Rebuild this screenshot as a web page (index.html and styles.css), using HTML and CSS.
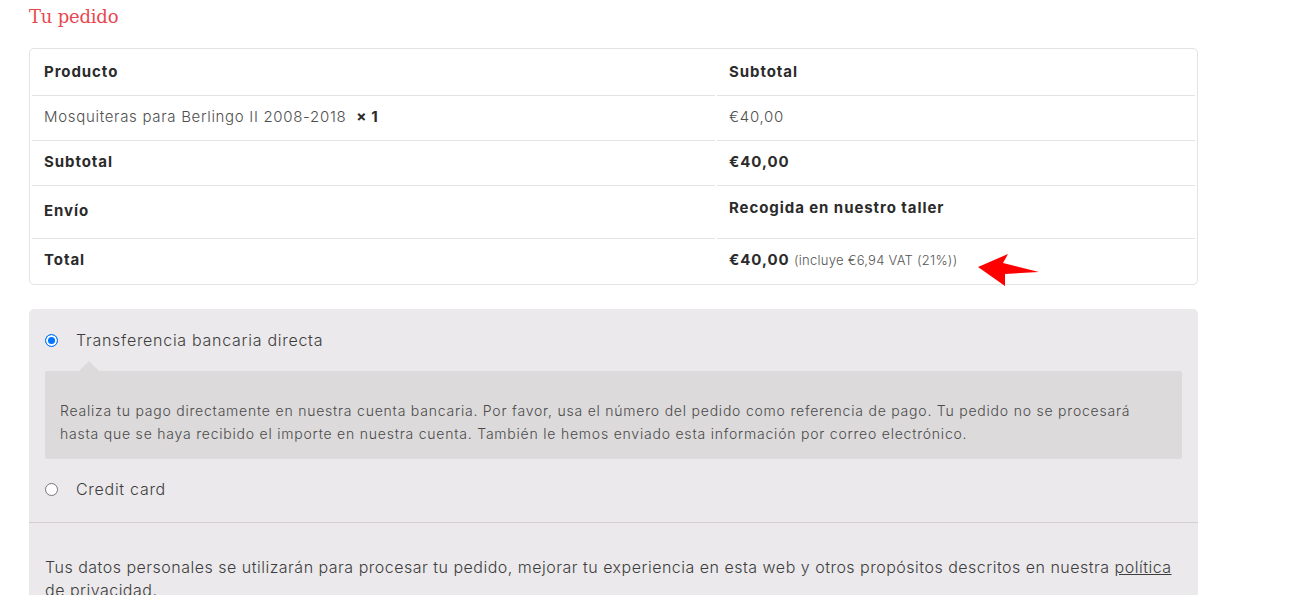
FILE: index.html
```html
<!DOCTYPE html>
<html lang="es">
<head>
<meta charset="utf-8">
<title>Tu pedido</title>
<link rel="stylesheet" href="styles.css">
</head>
<body>
<div class="wrap">
  <h3 class="order-title">Tu pedido</h3>
  <div class="review">
    <table class="shop-table">
      <thead>
        <tr><th class="col-product">Producto</th><th class="col-total">Subtotal</th></tr>
      </thead>
      <tbody>
        <tr class="row"><td class="light">Mosquiteras para Berlingo II 2008-2018&nbsp; <strong class="qty">×&nbsp;1</strong></td><td class="light">€40,00</td></tr>
        <tr class="row"><th>Subtotal</th><td class="strong">€40,00</td></tr>
        <tr class="row shipping"><th class="ship-th">Envío</th><td class="strong ship-td">Recogida en nuestro taller</td></tr>
        <tr class="row"><th>Total</th><td class="strong total-td">€40,00 <small class="tax">(incluye €6,94 VAT (21%))</small>
          <svg class="arrow" width="64" height="34" viewBox="0 0 64 34"><polygon points="0,14 30,1 25,10 61,19 27,21 27,33" fill="#ff0000"/></svg>
        </td></tr>
      </tbody>
    </table>
  </div>

  <div class="payment">
    <ul class="methods">
      <li class="method">
        <label class="method-label"><span class="radio checked"></span>Transferencia bancaria directa</label>
        <div class="payment-box">
          <p>Realiza tu pago directamente en nuestra cuenta bancaria. Por favor, usa el número del pedido como referencia de pago. Tu pedido no se procesará hasta que se haya recibido el importe en nuestra cuenta. También le hemos enviado esta información por correo electrónico.</p>
        </div>
      </li>
      <li class="method second">
        <label class="method-label"><span class="radio"></span>Credit card</label>
      </li>
    </ul>
    <div class="place-order">
      <p>Tus datos personales se utilizarán para procesar tu pedido, mejorar tu experiencia en esta web y otros propósitos descritos en nuestra <a href="#" class="policy">política de privacidad</a>.</p>
    </div>
  </div>
</div>
</body>
</html>
```

FILE: styles.css
```css
html, body {
  margin: 0;
  padding: 0;
  background: #ffffff;
}
body {
  font-family: "Inter", "Noto Sans", sans-serif;
  color: #515151;
  letter-spacing: 0.045em;
}
.wrap {
  width: 1169px;
  padding-left: 29px;
}
.order-title {
  margin: 0;
  padding-top: 2px;
  font-family: "DejaVu Serif", serif;
  font-weight: normal;
  font-size: 18px;
  line-height: 30px;
  color: #e94750;
  letter-spacing: -0.2px;
}
.review {
  margin-top: 16px;
}
.shop-table {
  width: 1169px;
  border: 1px solid #e3e3e3;
  border-radius: 5px;
  border-collapse: separate;
  border-spacing: 2px 0;
  font-size: 15px;
  line-height: 21px;
}
.shop-table th,
.shop-table td {
  text-align: left;
  vertical-align: top;
  padding: 10px 12px 13px;
  font-weight: 700;
  color: #2b2b2b;
  letter-spacing: 0.062em;
}
.shop-table thead th {
  padding: 12px 12px 13px;
}
.col-product { width: 659px; }
.row th, .row td {
  border-top: 1px solid #e3e3e3;
}
.shop-table td.light {
  font-weight: 300;
  color: #4f4f4f;
  letter-spacing: 0.046em;
}
.qty {
  font-weight: 700;
  color: #2b2b2b;
}
.shop-table .ship-th {
  padding-top: 14px;
  padding-bottom: 17px;
}
.shop-table .ship-td {
  padding-top: 11px;
  padding-bottom: 20px;
}
.total-td {
  position: relative;
}
.tax {
  font-size: 13px;
  font-weight: 300;
  color: #555;
  letter-spacing: 0.02em;
}
.arrow {
  position: absolute;
  left: 261px;
  top: 14px;
}
.payment {
  margin-top: 24px;
  background: #ebe9eb;
  border-radius: 5px 5px 0 0;
}
.methods {
  list-style: none;
  margin: 0;
  padding: 16px 16px 18px;
  border-bottom: 1px solid #d3ced2;
}
.method-label {
  display: flex;
  align-items: center;
  font-size: 16px;
  line-height: 30px;
  font-weight: 300;
  color: #3d3d3d;
}
.radio {
  width: 13px;
  height: 13px;
  box-sizing: border-box;
  border-radius: 50%;
  border: 1px solid #767676;
  background: #fff;
  margin: 0 18px 0 0;
  flex: none;
}
.radio.checked {
  border: 1px solid #0075ff;
  background: #0075ff;
  box-shadow: inset 0 0 0 2px #fff;
}
.payment-box {
  position: relative;
  margin-top: 16px;
  background: #dcdadb;
  padding: 28px 15px 14px;
  font-size: 14px;
  line-height: 23px;
  font-weight: 300;
  color: #4a4a4a;
  letter-spacing: 0.056em;
  border-radius: 2px;
}
.payment-box::before {
  content: "";
  position: absolute;
  left: 34px;
  top: -10px;
  border-left: 10px solid transparent;
  border-right: 10px solid transparent;
  border-bottom: 10px solid #dcdadb;
}
.payment-box p {
  margin: 0;
}
.second {
  margin-top: 15px;
}
.place-order {
  padding: 33px 16px 0;
  font-size: 16px;
  line-height: 23px;
  font-weight: 300;
  color: #3d3d3d;
  letter-spacing: 0.031em;
}
.place-order p {
  margin: 0;
}
.policy {
  color: #3d3d3d;
  text-decoration: underline;
}
```
